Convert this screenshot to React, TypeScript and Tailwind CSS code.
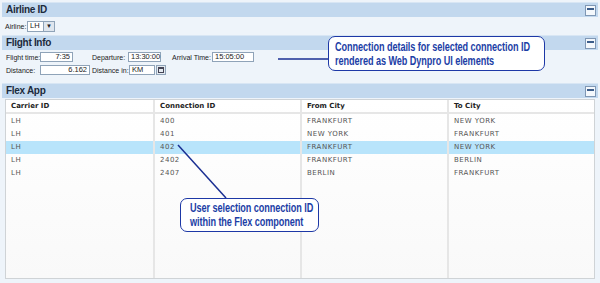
const FONT = "font-['Liberation_Sans',Arial,sans-serif]";
const TABLE_FONT = "font-['DejaVu_Sans',Verdana,sans-serif]";

const rows = [
  { carrier: "LH", conn: "400", from: "FRANKFURT", to: "NEW YORK" },
  { carrier: "LH", conn: "401", from: "NEW YORK", to: "FRANKFURT" },
  { carrier: "LH", conn: "402", from: "FRANKFURT", to: "NEW YORK" },
  { carrier: "LH", conn: "2402", from: "FRANKFURT", to: "BERLIN" },
  { carrier: "LH", conn: "2407", from: "BERLIN", to: "FRANKFURT" },
];

function MinimizeIcon() {
  return (
    <div className="w-[11px] h-[11px] border border-[#7f97b4] bg-[#f4f8fc] flex flex-col px-[1px] pt-[2px]">
      <div className="h-[2px] bg-[#3c5d8a]" />
    </div>
  );
}

function SectionHeader({ title }: { title: string }) {
  return (
    <div className="h-[15px] mx-[2px] bg-[#c2d8ee] border-t border-[#d8e6f4] flex items-center justify-between pl-[4px] pr-[2px]">
      <span className="text-[10px] font-bold tracking-[-0.3px] text-[#1b2a3c] leading-none">{title}</span>
      <MinimizeIcon />
    </div>
  );
}

function Label({ text, w, pl }: { text: string; w: string; pl?: string }) {
  return <span className={`${w} ${pl ?? ""} shrink-0 whitespace-nowrap text-[7px] leading-none`}>{text}</span>;
}

function Field({ value, w, right }: { value: string; w: string; right?: boolean }) {
  return (
    <div
      className={`${w} shrink-0 h-[10px] bg-white border border-[#8fa3b8] text-[7.5px] leading-none text-[#222] px-[2px] flex items-center whitespace-nowrap ${
        right ? "justify-end" : ""
      }`}
    >
      {value}
    </div>
  );
}

function Callout({ lines, cls }: { lines: string[]; cls: string }) {
  return (
    <div
      className={`absolute rounded-[7px] border-[1.5px] border-[#1d38a6] bg-white flex flex-col justify-center ${cls} font-['Liberation_Sans',Arial,sans-serif] text-[12.5px] font-bold leading-[14px] text-[#1c3ea6]`}
    >
      {lines.map((l) => (
        <span key={l} className="whitespace-nowrap origin-left scale-x-[0.73] tracking-[-0.1px]">
          {l}
        </span>
      ))}
    </div>
  );
}

export default function App() {
  return (
    <div className={`relative w-[600px] h-[283px] overflow-hidden bg-[#eef4fa] pt-[2px] ${FONT}`}>
      <SectionHeader title="Airline ID" />
      <div className="h-[18px] flex items-center pl-[5px] gap-[1px] text-[#222]">
        <Label text="Airline:" w="w-[21px]" />
        <div className="flex h-[11px] border border-[#8fa3b8] bg-white text-[7.5px]">
          <span className="w-[15px] pl-[2px] flex items-center">LH</span>
          <span className="w-[11px] bg-[#dfe6ee] border-l border-[#8fa3b8] flex items-center justify-center text-[6px] text-[#222]">
            ▼
          </span>
        </div>
      </div>

      <SectionHeader title="Flight Info" />
      <div className="flex flex-col gap-[3px] pt-[2px] pl-[6px] h-[30px] text-[#222]">
        <div className="flex items-center">
          <Label text="Flight time:" w="w-[34px]" />
          <Field value="7:35" w="w-[33px]" right />
          <Label text="Departure:" w="w-[55px]" pl="pl-[19px]" />
          <Field value="13:30:00" w="w-[33px]" />
          <Label text="Arrival Time:" w="w-[51px]" pl="pl-[11px]" />
          <Field value="15:05:00" w="w-[42px]" />
        </div>
        <div className="flex items-center">
          <Label text="Distance:" w="w-[34px]" />
          <Field value="6.162" w="w-[50px]" right />
          <Label text="Distance in:" w="w-[39px]" pl="pl-[2px]" />
          <Field value="KM" w="w-[26px]" />
          <div className="w-[10px] h-[10px] ml-[1px] border border-[#8fa3b8] bg-[#e4eaf0] flex items-center justify-center">
            <div className="w-[6px] h-[6px] border border-[#445] border-t-2" />
          </div>
        </div>
      </div>

      <div className="pt-[3px]">
        <SectionHeader title="Flex App" />
      </div>

      <div className={`mx-[5px] mt-[1px] h-[180px] border border-[#cfd3d6] bg-gradient-to-b from-white to-[#f9f9f9] ${TABLE_FONT}`}>
        <div className="grid grid-cols-4 h-[14px] border-b-2 border-[#e6e6e6] text-[7px] font-bold text-[#222]">
          {["Carrier ID", "Connection ID", "From City", "To City"].map((h, i) => (
            <div key={h} className={`flex items-center pl-[5px] ${i > 0 ? "border-l-2 border-[#e6e6e6]" : ""}`}>
              {h}
            </div>
          ))}
        </div>
        <div className="grid grid-cols-4 h-[164px] text-[7px] text-[#555] tracking-[0.5px]">
          {[0, 1, 2, 3].map((c) => (
            <div key={c} className={`flex flex-col pt-[1px] ${c > 0 ? "border-l-2 border-[#e6e6e6]" : ""}`}>
              {rows.map((r, i) => (
                <div
                  key={i}
                  className={`h-[13px] flex items-center pl-[5px] ${i === 2 ? "bg-[#b8e4fb]" : ""}`}
                >
                  {[r.carrier, r.conn, r.from, r.to][c]}
                </div>
              ))}
            </div>
          ))}
        </div>
      </div>

      <svg className="absolute inset-0 pointer-events-none" width="600" height="283">
        <line x1="278" y1="59" x2="328" y2="59" stroke="#1a2f93" strokeWidth="1.5" />
        <line x1="178" y1="145" x2="226" y2="198" stroke="#1a2f93" strokeWidth="1.5" />
      </svg>

      <Callout
        cls="left-[328px] top-[36px] w-[217px] h-[35px] pl-[6px]"
        lines={["Connection details for selected connection ID", "rendered as Web Dynpro UI elements"]}
      />
      <Callout
        cls="left-[180px] top-[198px] w-[139px] h-[34px] pl-[9px]"
        lines={["User selection connection ID", "within the Flex component"]}
      />
    </div>
  );
}
